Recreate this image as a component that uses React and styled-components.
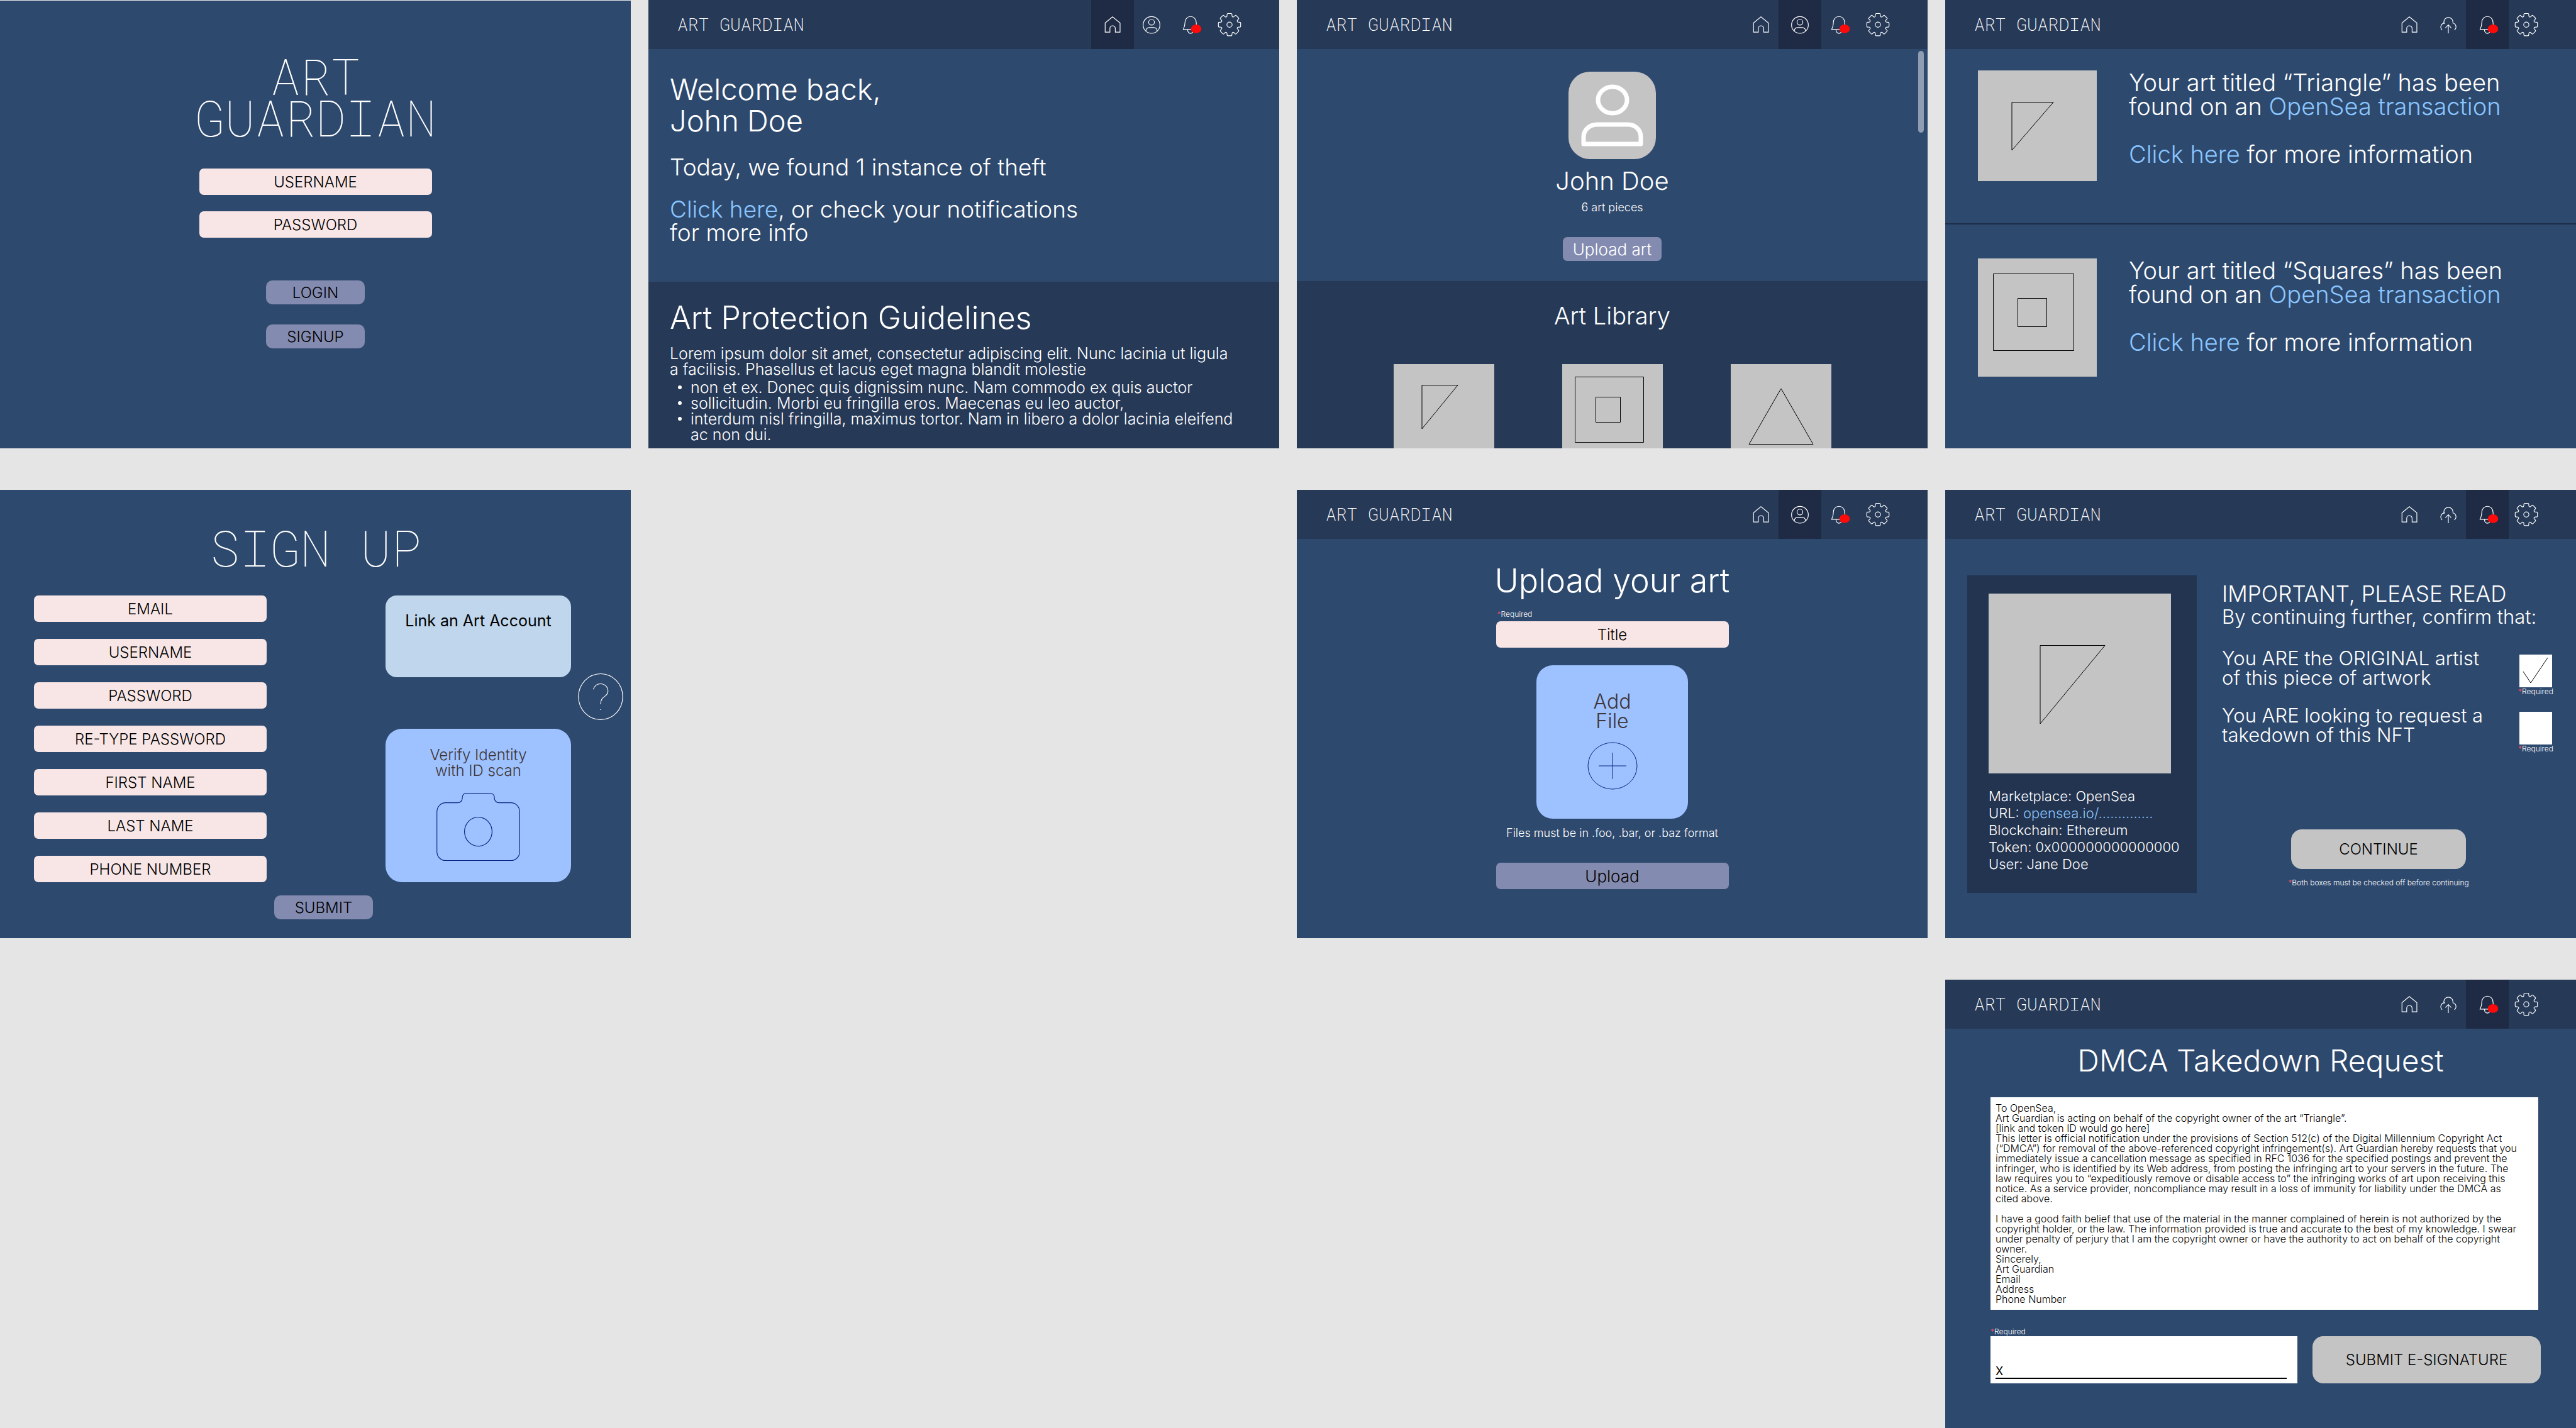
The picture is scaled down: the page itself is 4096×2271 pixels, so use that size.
import React, { useId } from 'react';
import styled, { createGlobalStyle, css } from 'styled-components';

const color = {
  canvas: '#e5e5e5',
  page: '#2e496e',
  bar: '#263957',
  barActive: '#1f2b45',
  panel: '#223450',
  rule: '#1d2d49',
  field: '#f8e6e6',
  action: '#848bb0',
  grey: '#c4c4c4',
  link: '#8ac6ff',
  card: '#9dc2ff',
  cardSoft: '#bfd6ec',
  ink: '#403638',
  navy: '#0b2380',
  alert: '#ff0a0a',
  required: '#ff4f5e',
};

const GlobalStyle = createGlobalStyle`
  *, *::before, *::after { box-sizing: border-box; }
  body {
    margin: 0;
    background: ${color.canvas};
    color: #fff;
    font-family: Inter, "Liberation Sans", sans-serif;
    font-weight: 300;
  }
  h1, h2, h3, p, ul { margin: 0; padding: 0; font-weight: 300; }
  button, input { font: inherit; border: 0; padding: 0; margin: 0; }
  button { cursor: pointer; }
`;

/* ---------- board ---------- */

const Board = styled.main`
  display: grid;
  grid-template-columns: repeat(4, minmax(0, 1fr));
  gap: 66px 28px;
`;

const Screen = styled.section`
  grid-column: ${(p) => p.$col};
  grid-row: ${(p) => p.$row};
  position: relative;
  display: flex;
  flex-direction: column;
  aspect-ratio: 1003 / 713;
  min-height: 0;
  overflow: hidden;
  background: ${color.page};
  border-top: ${(p) => (p.$edge ? `1px solid ${color.canvas}` : '0')};
`;

const TopBar = styled.header`
  display: flex;
  flex: none;
  align-items: stretch;
  justify-content: space-between;
  height: 78px;
  padding: 0 48px 0 46px;
  background: ${color.bar};
`;

const Brand = styled.a`
  align-self: center;
  color: #fff;
  text-decoration: none;
  font: 200 28px/32px "Roboto Mono", "Liberation Mono", monospace;
`;

const Nav = styled.nav`
  display: flex;
`;

const NavItem = styled.a`
  display: flex;
  align-items: center;
  justify-content: center;
  width: 68px;
  margin: 0 -3px;
  color: #fff;
  background: ${(p) => (p.$active ? color.barActive : 'transparent')};
`;

const Glyph = styled.svg`
  display: block;
  flex: none;
  width: ${(p) => p.$w}px;
  height: ${(p) => p.$h}px;
  fill: none;
  stroke: currentColor;
  stroke-width: ${(p) => p.$stroke || 5};
  overflow: visible;
`;

const NavGlyph = (props) => <Glyph viewBox="0 0 200 200" $w={46} $h={46} aria-hidden="true" {...props} />;

const HomeIcon = () => (
  <NavGlyph>
    <path d="M49 89 L100 47 L152 89 V153 H119 V127 A18.5 18.5 0 0 0 82 127 V153 H49 Z" />
  </NavGlyph>
);

const UserIcon = () => (
  <NavGlyph>
    <circle cx="100" cy="103" r="58" />
    <circle cx="100" cy="84" r="20" />
    <path d="M61 145 C62 130 70 121 84 121 H116 C130 121 138 130 139 145" />
  </NavGlyph>
);

const CloudIcon = () => (
  <NavGlyph>
    <path d="M57 138 A27 27 0 0 1 78 91" />
    <path d="M69 91 V83 A31 31 0 0 1 132 83 V90 A27 27 0 0 1 142 138" />
    <path d="M100 161 V102 M80 123 L100 102 L120 123" />
  </NavGlyph>
);

const BellIcon = () => (
  <NavGlyph>
    <path d="M80 135 C80 170 120 170 120 135" />
    <path d="M50 134 C58 118 62 104 62 84 A38 39 0 0 1 139 84 C139 104 142 118 150 134 Z" />
    <ellipse cx="139" cy="130" rx="36" ry="30" fill={color.alert} stroke="none" />
  </NavGlyph>
);

const TOOTH = 'M-17 -63 V-71 Q-17 -77 -11 -77 H11 Q17 -77 17 -71 V-63 C17 -53 25.5 -49.5 32.5 -56.6';

const GearIcon = () => (
  <NavGlyph>
    <g transform="translate(100 101)">
      <circle r="18" />
      {[0, 45, 90, 135, 180, 225, 270, 315].map((a) => (
        <path key={a} d={TOOTH} transform={`rotate(${a})`} />
      ))}
    </g>
  </NavGlyph>
);

const ICONS = { home: HomeIcon, profile: UserIcon, upload: CloudIcon, notifications: BellIcon, settings: GearIcon };

function Header({ items, active }) {
  return (
    <TopBar>
      <Brand href="#home">ART GUARDIAN</Brand>
      <Nav aria-label="Main">
        {items.map((name) => {
          const Icon = ICONS[name];
          return (
            <NavItem key={name} href={`#${name}`} aria-label={name} $active={name === active}>
              <Icon />
            </NavItem>
          );
        })}
      </Nav>
    </TopBar>
  );
}

const MEMBER_NAV = ['home', 'profile', 'notifications', 'settings'];
const ARTIST_NAV = ['home', 'upload', 'notifications', 'settings'];

/* ---------- shared parts ---------- */

const Wordmark = styled.h1`
  font: 100 80px/66px "Roboto Mono", "Liberation Mono", monospace;
  text-align: center;
`;

const Display = styled.h2`
  font-size: ${(p) => p.$size}px;
  line-height: 50px;
`;

const CenteredDisplay = styled(Display)`
  flex: none;
  text-align: center;
`;

const Lead = styled.p`
  font-size: ${(p) => p.$size || 37}px;
  line-height: ${(p) => (p.$loose ? 38 : 37)}px;
`;

const TextLink = styled.a`
  color: ${color.link};
  text-decoration: none;
`;

const Field = styled.input`
  display: block;
  flex: none;
  width: 370px;
  height: 42px;
  border-radius: 7px;
  background: ${color.field};
  color: #000;
  font-size: 24px;
  text-align: center;
  &::placeholder { color: #000; opacity: 1; }
`;

const Action = styled.button`
  flex: none;
  width: ${(p) => (p.$wide ? 370 : 157)}px;
  height: ${(p) => (p.$wide ? 42 : 38)}px;
  border-radius: ${(p) => (p.$soft ? 10 : 7)}px;
  background: ${color.action};
  color: ${(p) => (p.$light ? '#fff' : '#000')};
  font-size: ${(p) => (p.$soft ? 24 : 26)}px;
`;

const GreyButton = styled.button`
  border-radius: 17px;
  background: ${color.grey};
  color: #000;
  font-size: 24px;
`;

const Hint = styled.span`
  display: block;
  font-size: 12px;
  line-height: 14px;
  white-space: nowrap;
  &::before { content: '*'; color: ${color.required}; }
`;

const Thumb = styled.div`
  flex: none;
  width: ${(p) => p.$w}px;
  height: ${(p) => p.$h}px;
  background: ${color.grey};
  color: #000;
`;

const Drawing = ({ w, h, label, children }) => (
  <Thumb $w={w} $h={h}>
    <Glyph viewBox={`0 0 ${w} ${h}`} $w={w} $h={h} $stroke={1} role="img" aria-label={label}>
      {children}
    </Glyph>
  </Thumb>
);

/* ---------- login ---------- */

const LoginForm = styled.form`
  display: flex;
  flex-direction: column;
  align-items: center;
  padding-top: 86px;
`;

const Stack = styled.div`
  display: flex;
  flex-direction: column;
  gap: ${(p) => p.$gap}px;
  margin-top: ${(p) => p.$top || 0}px;
`;

const stop = (e) => e.preventDefault();

function Login() {
  return (
    <Screen $col={1} $row={1} $edge>
      <LoginForm onSubmit={stop}>
        <Wordmark>ART<br />GUARDIAN</Wordmark>
        <Stack $gap={26} $top={49}>
          <Field placeholder="USERNAME" aria-label="Username" />
          <Field type="password" placeholder="PASSWORD" aria-label="Password" />
        </Stack>
        <Stack $gap={32} $top={68}>
          <Action $soft>LOGIN</Action>
          <Action $soft type="button">SIGNUP</Action>
        </Stack>
      </LoginForm>
    </Screen>
  );
}

/* ---------- home ---------- */

const Hero = styled.div`
  display: flex;
  flex-direction: column;
  gap: 30px;
  padding: 39px 34px 60px;
`;

const Guidelines = styled.article`
  flex: 1;
  padding: 32px 34px 0;
  background: ${color.bar};
`;

const Copy = styled.div`
  margin-top: 20px;
  font-size: 25px;
  line-height: 25px;
  white-space: nowrap;
`;

const Bullets = styled.ul`
  margin-top: 4px;
  padding-left: 33px;
  list-style: none;
`;

const Bullet = styled.li`
  &::before {
    content: '';
    float: left;
    width: 6px;
    height: 6px;
    margin: 9px 0 0 -20px;
    border-radius: 50%;
    background: #fff;
  }
`;

function Home() {
  return (
    <Screen $col={2} $row={1}>
      <Header items={MEMBER_NAV} active="home" />
      <Hero>
        <Display $size={47}>Welcome back,<br />John Doe</Display>
        <Lead>Today, we found 1 instance of theft</Lead>
        <Lead>
          <TextLink href="#theft">Click here</TextLink>, or check your notifications<br />for more info
        </Lead>
      </Hero>
      <Guidelines>
        <Display $size={50}>Art Protection Guidelines</Display>
        <Copy>
          <p>
            Lorem ipsum dolor sit amet, consectetur adipiscing elit. Nunc lacinia ut ligula<br />
            a facilisis. Phasellus et lacus eget magna blandit molestie
          </p>
          <Bullets>
            <Bullet>non et ex. Donec quis dignissim nunc. Nam commodo ex quis auctor</Bullet>
            <Bullet>sollicitudin. Morbi eu fringilla eros. Maecenas eu leo auctor,</Bullet>
            <Bullet>interdum nisl fringilla, maximus tortor. Nam in libero a dolor lacinia eleifend<br />ac non dui.</Bullet>
          </Bullets>
        </Copy>
      </Guidelines>
    </Screen>
  );
}

/* ---------- profile ---------- */

const ProfileCard = styled.div`
  display: flex;
  flex: none;
  flex-direction: column;
  align-items: center;
  padding: 36px 0 32px;
`;

const Avatar = styled.div`
  width: 139px;
  height: 139px;
  border-radius: 34px;
  background: ${color.grey};
`;

const Name = styled.h2`
  margin-top: 15px;
  font-size: 40px;
  line-height: 40px;
`;

const Small = styled.p`
  font-size: 18px;
  line-height: 24px;
  text-align: center;
`;

const PieceCount = styled(Small)`
  margin: 10px 0 35px;
`;

const Library = styled.div`
  flex: 1;
  padding-top: 36px;
  background: ${color.bar};
  text-align: center;
`;

const Gallery = styled.div`
  display: flex;
  justify-content: center;
  gap: 108px;
  margin-top: 58px;
`;

const ScrollThumb = styled.div`
  position: absolute;
  top: 81px;
  right: 6px;
  width: 9px;
  height: 130px;
  border-radius: 5px;
  background: #8f9cb1;
`;

function Profile() {
  return (
    <Screen $col={3} $row={1}>
      <Header items={MEMBER_NAV} active="profile" />
      <ProfileCard>
        <Avatar>
          <Glyph viewBox="0 0 139 139" $w={139} $h={139} $stroke={7} color="#fff" role="img" aria-label="Profile picture">
            <ellipse cx="70" cy="45" rx="23" ry="21" />
            <path strokeLinejoin="round" d="M24 115 V104 C24 92 34 84 46 84 H94 C106 84 115 92 115 104 V115 Z" />
          </Glyph>
        </Avatar>
        <Name>John Doe</Name>
        <PieceCount>6 art pieces</PieceCount>
        <Action $light>Upload art</Action>
      </ProfileCard>
      <Library>
        <Lead as="h3" $loose $size={38}>Art Library</Lead>
        <Gallery>
          <Drawing w={160} h={160} label="Triangle"><path d="M45 33.5 H102 L45 103 Z" /></Drawing>
          <Drawing w={160} h={160} label="Squares"><path d="M20.5 20.5 H129.5 V124.5 H20.5 Z M53.5 52.5 H92.5 V92.5 H53.5 Z" /></Drawing>
          <Drawing w={160} h={160} label="Pyramid"><path d="M80 39 L131 127.5 H29 Z" /></Drawing>
        </Gallery>
      </Library>
      <ScrollThumb />
    </Screen>
  );
}

/* ---------- notifications ---------- */

const Notice = styled.article`
  display: flex;
  gap: 51px;
  padding: ${(p) => (p.$first ? '34px 0 67px 52px' : '54px 0 54px 52px')};
  border-bottom: ${(p) => (p.$first ? `2px solid ${color.rule}` : '0')};
`;

function Notification({ title, first, children }) {
  return (
    <Notice $first={first}>
      {children}
      <Lead $loose $size={38}>
        Your art titled “{title}” has been<br />
        found on an <TextLink href="#transaction">OpenSea transaction</TextLink><br /><br />
        <TextLink href="#details">Click here</TextLink> for more information
      </Lead>
    </Notice>
  );
}

function Notifications() {
  return (
    <Screen $col={4} $row={1}>
      <Header items={ARTIST_NAV} active="notifications" />
      <Notification title="Triangle" first>
        <Drawing w={189} h={176} label="Triangle"><path d="M54 50.5 H120 L54 127 Z" /></Drawing>
      </Notification>
      <Notification title="Squares">
        <Drawing w={189} h={188} label="Squares"><path d="M24.5 24.5 H152.5 V146.5 H24.5 Z M63.5 63.5 H109.5 V108.5 H63.5 Z" /></Drawing>
      </Notification>
    </Screen>
  );
}

/* ---------- sign up ---------- */

const SignUpForm = styled.form`
  padding: 58px 12px 0 54px;
`;

const SignUpTitle = styled(Wordmark)`
  padding-right: 42px;
`;

const SignUpColumns = styled.div`
  display: flex;
  align-items: stretch;
  margin-top: 44px;
`;

const FieldColumn = styled.div`
  display: flex;
  flex-direction: column;
  gap: 27px;
`;

const CardColumn = styled.div`
  display: flex;
  flex-direction: column;
  justify-content: space-between;
  margin-left: auto;
  margin-right: 11px;
`;

const cardBase = css`
  display: flex;
  flex-direction: column;
  align-items: center;
  justify-content: flex-start;
`;

const LinkCard = styled.button`
  ${cardBase}
  width: 295px;
  height: 130px;
  padding-top: 28px;
  border-radius: 18px;
  background: ${color.cardSoft};
  color: #000;
  font-size: 25px;
  font-weight: 400;
  line-height: 25px;
`;

const UploadCard = styled.button`
  ${cardBase}
  width: ${(p) => p.$w}px;
  height: 244px;
  padding-top: ${(p) => p.$top}px;
  gap: ${(p) => p.$gap}px;
  border-radius: 26px;
  background: ${color.card};
  color: ${color.ink};
  font-size: ${(p) => p.$size}px;
  line-height: ${(p) => p.$line}px;
`;

const HelpButton = styled.button`
  align-self: flex-start;
  margin-top: 124px;
  background: none;
  color: #fff;
`;

const SubmitRow = styled.div`
  margin-top: 21px;
  padding-left: 382px;
`;

const SIGNUP_FIELDS = ['EMAIL', 'USERNAME', 'PASSWORD', 'RE-TYPE PASSWORD', 'FIRST NAME', 'LAST NAME', 'PHONE NUMBER'];

function SignUp() {
  return (
    <Screen $col={1} $row={2}>
      <SignUpForm onSubmit={stop}>
        <SignUpTitle>SIGN UP</SignUpTitle>
        <SignUpColumns>
          <FieldColumn>
            {SIGNUP_FIELDS.map((name) => (
              <Field key={name} placeholder={name} aria-label={name} />
            ))}
          </FieldColumn>
          <CardColumn>
            <LinkCard type="button">Link an Art Account</LinkCard>
            <UploadCard type="button" $w={295} $top={29} $gap={23} $size={24} $line={25}>
              <span>Verify Identity<br />with ID scan</span>
              <Glyph viewBox="109 70 574 468" $w={133} $h={108} $stroke={5} color={color.navy} aria-hidden="true">
                <path d="M172 138 H255 C272 138 286 124 286 104 C286 84 298 72 317 72 H475 C494 72 507 84 507 104 C507 124 522 138 538 138 H620 C655 138 681 165 681 201 V474 C681 510 655 536 620 536 H172 C137 536 111 510 111 474 V201 C111 165 137 138 172 138 Z" />
                <ellipse cx="396" cy="337" rx="95" ry="100" />
              </Glyph>
            </UploadCard>
          </CardColumn>
          <HelpButton type="button" aria-label="Help">
            <Glyph viewBox="61 113 310 322" $w={72} $h={74} $stroke={5} aria-hidden="true">
              <ellipse cx="216" cy="274" rx="153" ry="159" />
              <path d="M166 223 C174 198 193 185 216 185 C245 185 267 207 267 236 C267 278 216 265 216 326 M213 363 H219" />
            </Glyph>
          </HelpButton>
        </SignUpColumns>
        <SubmitRow>
          <Action $soft>SUBMIT</Action>
        </SubmitRow>
      </SignUpForm>
    </Screen>
  );
}

/* ---------- upload ---------- */

const UploadForm = styled.form`
  display: flex;
  flex-direction: column;
  align-items: center;
  padding-top: 42px;
`;

const LabelledField = styled.label`
  display: flex;
  flex-direction: column;
  gap: 4px;
  margin: 21px 0 28px;
`;

const HintIndent = styled.span`
  padding-left: 2px;
`;

const FormatNote = styled(Small)`
  margin: 11px 0 35px;
`;

function Upload() {
  return (
    <Screen $col={3} $row={2}>
      <Header items={MEMBER_NAV} active="profile" />
      <UploadForm onSubmit={stop}>
        <CenteredDisplay $size={52}>Upload your art</CenteredDisplay>
        <LabelledField>
          <HintIndent><Hint>Required</Hint></HintIndent>
          <Field placeholder="Title" aria-label="Title" required />
        </LabelledField>
        <UploadCard type="button" $w={241} $top={42} $gap={18} $size={32} $line={31}>
          <span>Add<br />File</span>
          <Glyph viewBox="0 0 80 76" $w={80} $h={76} $stroke={1} color={color.navy} aria-hidden="true">
            <ellipse cx="40" cy="38" rx="39" ry="37" />
            <path d="M40 17 V59 M18 38 H62" />
          </Glyph>
        </UploadCard>
        <FormatNote>Files must be in .foo, .bar, or .baz format</FormatNote>
        <Action $wide>Upload</Action>
      </UploadForm>
    </Screen>
  );
}

/* ---------- confirm ---------- */

const ConfirmLayout = styled.form`
  display: flex;
  align-items: flex-start;
  gap: 40px;
  padding: 58px 38px 0 35px;
`;

const ArtPanel = styled.aside`
  flex: none;
  padding: 29px 41px 32px 34px;
  background: ${color.panel};
`;

const Facts = styled.p`
  width: 290px;
  margin-top: 23px;
  font-size: 22px;
  line-height: 27px;
  white-space: nowrap;
`;

const ConfirmColumn = styled.div`
  flex: 1;
  padding-top: 10px;
`;

const Statement = styled.p`
  font-size: 31px;
  line-height: ${(p) => (p.$intro ? 36 : 31)}px;
  white-space: nowrap;
`;

const CheckRow = styled.label`
  display: flex;
  justify-content: space-between;
  margin-top: ${(p) => p.$top}px;
`;

const CheckColumn = styled.span`
  display: flex;
  flex-direction: column;
  align-items: center;
  width: 52px;
  padding-top: 10px;
`;

const CheckStack = styled.span`
  display: grid;
  color: #000;
  & > * { grid-area: 1 / 1; }
  svg { pointer-events: none; visibility: hidden; }
  input:checked + svg { visibility: visible; }
`;

const CheckBox = styled.input`
  appearance: none;
  width: 52px;
  height: 52px;
  background: #fff;
`;

const ContinueBlock = styled.div`
  display: flex;
  flex-direction: column;
  align-items: center;
  gap: 15px;
  width: 278px;
  margin: 121px 0 0 110px;
`;

const ContinueButton = styled(GreyButton)`
  width: 278px;
  height: 63px;
`;

function ConfirmCheck({ top, checked, children }) {
  const id = useId();
  return (
    <CheckRow htmlFor={id} $top={top}>
      <Statement as="span">{children}</Statement>
      <CheckColumn>
        <CheckStack>
          <CheckBox type="checkbox" id={id} defaultChecked={checked} />
          <Glyph viewBox="0 0 52 52" $w={52} $h={52} $stroke={1} aria-hidden="true">
            <path d="M6 27 L18 45 L45 5" />
          </Glyph>
        </CheckStack>
        <Hint>Required</Hint>
      </CheckColumn>
    </CheckRow>
  );
}

function Confirm() {
  return (
    <Screen $col={4} $row={2}>
      <Header items={ARTIST_NAV} active="notifications" />
      <ConfirmLayout onSubmit={stop}>
        <ArtPanel>
          <Drawing w={290} h={286} label="Triangle"><path d="M82 82.5 H185 L82 207 Z" /></Drawing>
          <Facts>
            Marketplace: OpenSea<br />
            URL: <TextLink href="#listing">opensea.io/..............</TextLink><br />
            Blockchain: Ethereum<br />
            Token: 0x000000000000000<br />
            User: Jane Doe
          </Facts>
        </ArtPanel>
        <ConfirmColumn>
          <Lead as="h2" $loose $size={35}>IMPORTANT, PLEASE READ</Lead>
          <Statement $intro>By continuing further, confirm that:</Statement>
          <ConfirmCheck top={32} checked>You ARE the ORIGINAL artist<br />of this piece of artwork</ConfirmCheck>
          <ConfirmCheck top={15}>You ARE looking to request a<br />takedown of this NFT</ConfirmCheck>
          <ContinueBlock>
            <ContinueButton>CONTINUE</ContinueButton>
            <Hint>Both boxes must be checked off before continuing</Hint>
          </ContinueBlock>
        </ConfirmColumn>
      </ConfirmLayout>
    </Screen>
  );
}

/* ---------- takedown ---------- */

const TakedownTitle = styled(CenteredDisplay)`
  margin-top: 26px;
`;

const TakedownForm = styled.form`
  padding: 33px 56px 0 72px;
`;

const Letter = styled.div`
  margin-right: 4px;
  padding: 9px 8px;
  background: #fff;
  color: #000;
  font-size: 16px;
  line-height: 16px;
  white-space: pre;
`;

const SignRow = styled.div`
  display: flex;
  gap: 24px;
  align-items: flex-end;
  margin-top: 28px;
`;

const SignLabel = styled.label`
  flex: none;
  width: 488px;
`;

const SignBox = styled.span`
  display: flex;
  align-items: flex-end;
  height: 75px;
  padding: 0 17px 7px 8px;
  background: #fff;
  color: #000;
`;

const SignLine = styled.span`
  display: flex;
  flex: 1;
  border-bottom: 2px solid #000;
  font-size: 18px;
  font-weight: 400;
  line-height: 20px;
`;

const SignInput = styled.input`
  flex: 1;
  background: none;
  outline: none;
`;

const SignButton = styled(GreyButton)`
  flex: 1;
  height: 75px;
`;

const LETTER = `To OpenSea,
Art Guardian is acting on behalf of the copyright owner of the art “Triangle”.
[link and token ID would go here]
This letter is official notification under the provisions of Section 512(c) of the Digital Millennium Copyright Act
(“DMCA”) for removal of the above-referenced copyright infringement(s). Art Guardian hereby requests that you
immediately issue a cancellation message as specified in RFC 1036 for the specified postings and prevent the
infringer, who is identified by its Web address, from posting the infringing art to your servers in the future. The
law requires you to “expeditiously remove or disable access to” the infringing works of art upon receiving this
notice. As a service provider, noncompliance may result in a loss of immunity for liability under the DMCA as
cited above.

I have a good faith belief that use of the material in the manner complained of herein is not authorized by the
copyright holder, or the law. The information provided is true and accurate to the best of my knowledge. I swear
under penalty of perjury that I am the copyright owner or have the authority to act on behalf of the copyright
owner.
Sincerely,
Art Guardian
Email
Address
Phone Number`;

function Takedown() {
  return (
    <Screen $col={4} $row={3}>
      <Header items={ARTIST_NAV} active="notifications" />
      <TakedownTitle $size={48}>DMCA Takedown Request</TakedownTitle>
      <TakedownForm onSubmit={stop}>
        <Letter>{LETTER}</Letter>
        <SignRow>
          <SignLabel>
            <Hint>Required</Hint>
            <SignBox>
              <SignLine>X<SignInput aria-label="Signature" required /></SignLine>
            </SignBox>
          </SignLabel>
          <SignButton>SUBMIT E-SIGNATURE</SignButton>
        </SignRow>
      </TakedownForm>
    </Screen>
  );
}

export default function App() {
  return (
    <>
      <GlobalStyle />
      <Board>
        <Login />
        <Home />
        <Profile />
        <Notifications />
        <SignUp />
        <Upload />
        <Confirm />
        <Takedown />
      </Board>
    </>
  );
}
